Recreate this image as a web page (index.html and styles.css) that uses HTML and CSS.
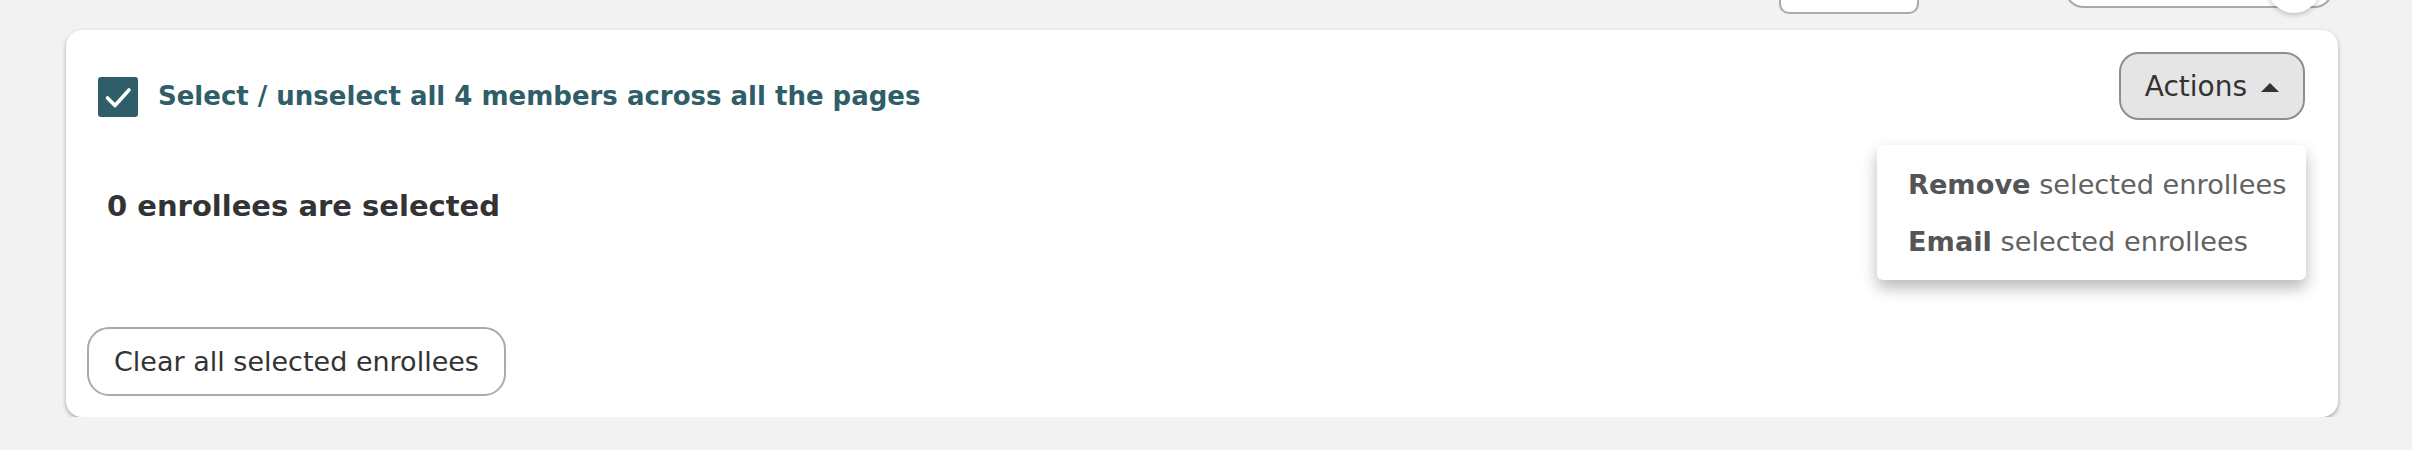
FILE: index.html
```html
<!DOCTYPE html>
<html lang="en">
<head>
<meta charset="utf-8">
<title>Enrollees</title>
<link rel="stylesheet" href="styles.css">
</head>
<body>
<main class="page">
  <div class="toolbar">
    <button class="tool-btn" type="button" aria-label="Filter"></button>
    <div class="switch" role="switch" aria-checked="true">
      <span class="switch-knob"></span>
    </div>
  </div>

  <section class="card">
    <div class="card-head">
      <label class="select-all">
        <span class="checkbox" aria-checked="true" role="checkbox">
          <svg viewBox="0 0 40 40" width="40" height="40" aria-hidden="true">
            <polyline points="9.5,21 17,28.5 31,13" fill="none" stroke="#fff" stroke-width="3.6" stroke-linecap="round" stroke-linejoin="round"/>
          </svg>
        </span>
        <span class="select-all-text">Select / unselect all 4 members across all the pages</span>
      </label>

      <div class="actions">
        <button class="actions-btn" type="button" aria-expanded="true">
          <span>Actions</span>
          <span class="caret-up"></span>
        </button>
        <ul class="menu">
          <li class="menu-item"><b>Remove</b> selected enrollees</li>
          <li class="menu-item"><b>Email</b> selected enrollees</li>
        </ul>
      </div>
    </div>

    <p class="count">0 enrollees are selected</p>

    <div class="card-foot">
      <button class="clear-btn" type="button">Clear all selected enrollees</button>
    </div>
  </section>
</main>
</body>
</html>
```
FILE: styles.css
```css
* { box-sizing: border-box; }

body {
  margin: 0;
  background: #f2f2f2;
  font-family: "DejaVu Sans", sans-serif;
  color: #333;
}

.page {
  padding: 0 74px 0 66px;
}

/* controls row above the card; only their lower edges are in view */
.toolbar {
  height: 30px;
  display: flex;
  justify-content: flex-end;
  align-items: flex-end;
  padding-right: 4px;
}

.tool-btn {
  width: 140px;
  height: 60px;
  margin-bottom: 16px;
  background: #fff;
  border: 2px solid #a9a9a9;
  border-radius: 10px;
  padding: 0;
}

.switch {
  position: relative;
  width: 270px;
  height: 56px;
  margin-left: 145px;
  margin-bottom: 22px;
  background: #fff;
  border: 2px solid #a9a9a9;
  border-radius: 20px;
}

.switch-knob {
  position: absolute;
  right: 11px;
  bottom: -7px;
  width: 54px;
  height: 54px;
  border-radius: 50%;
  background: #fff;
  box-shadow: 0 2px 5px rgba(0, 0, 0, 0.22);
}

.card {
  height: 387px;
  display: flex;
  flex-direction: column;
  background: #fff;
  border-radius: 16px;
  box-shadow: 0 2px 4px rgba(0, 0, 0, 0.32);
  padding: 22px 33px 21px 21px;
}

.card-head {
  display: flex;
  justify-content: space-between;
  align-items: flex-start;
}

.select-all {
  display: flex;
  align-items: center;
  gap: 20px;
  margin: 25px 0 0 11px;
  cursor: pointer;
}

.checkbox {
  display: block;
  width: 40px;
  height: 40px;
  border-radius: 3px;
  background: #2f5e69;
}

.checkbox svg { display: block; }

.select-all-text {
  font-size: 26px;
  font-weight: 700;
  color: #2f5e69;
  line-height: 1.2;
}

.actions {
  position: relative;
}

.actions-btn {
  display: flex;
  align-items: center;
  gap: 14px;
  height: 68px;
  padding: 0 24px 0 24px;
  background: #e5e5e5;
  border: 2px solid #8e8e8e;
  border-radius: 20px;
  font-family: inherit;
  font-size: 28px;
  color: #333;
  cursor: pointer;
}

.caret-up {
  width: 0;
  height: 0;
  border-left: 9.5px solid transparent;
  border-right: 9.5px solid transparent;
  border-bottom: 9px solid #333;
  margin-top: 2px;
}

.menu {
  position: absolute;
  top: calc(100% + 25px);
  right: -1px;
  width: 429px;
  margin: 0;
  padding: 11px 0 10px 31px;
  list-style: none;
  background: #fff;
  border-radius: 6px;
  box-shadow: 0 8px 16px rgba(0, 0, 0, 0.28);
  z-index: 2;
}

.menu-item {
  line-height: 57px;
  font-size: 27.2px;
  color: #626262;
  white-space: nowrap;
}

.menu-item b {
  font-weight: 700;
  color: #555;
}

.count {
  margin: 69px 0 0 20px;
  font-size: 29px;
  font-weight: 700;
  line-height: 1.2;
  color: #333;
}

.card-foot {
  margin-top: auto;
}

.clear-btn {
  height: 69px;
  padding: 0 25px;
  background: #fff;
  border: 2px solid #aaa;
  border-radius: 22px;
  font-family: inherit;
  font-size: 27px;
  color: #333;
  cursor: pointer;
}
```
